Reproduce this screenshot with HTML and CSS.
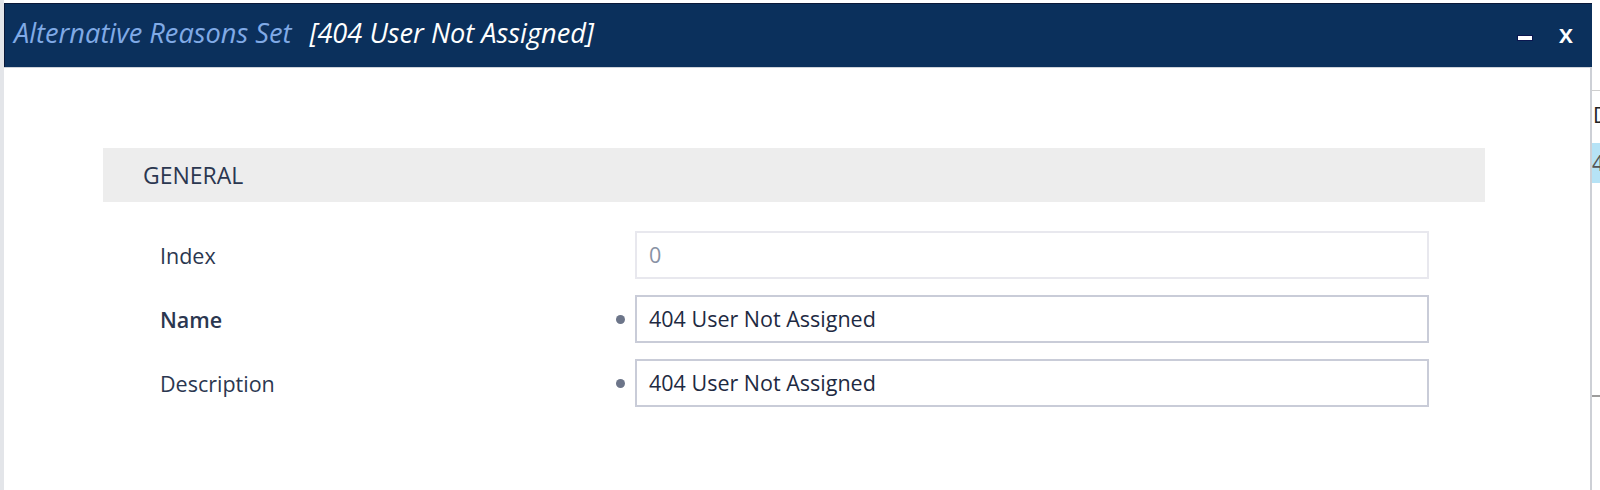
FILE: index.html
```html
<!DOCTYPE html>
<html>

<head>
    <title>Alternative Reasons Set</title>
    <link rel="stylesheet" href="styles.css">
</head>

<body>
    <div class="page-edge"></div>

    <div class="dialog">
        <div class="dialog-header">
            <div class="dialog-title"><span class="title-type">Alternative Reasons Set</span><span class="title-name">[404 User Not Assigned]</span></div>
            <div class="dialog-controls">
                <span class="minimize-btn"></span>
                <span class="close-btn">x</span>
            </div>
        </div>

        <div class="dialog-body">
            <div class="section-title">GENERAL</div>

            <div class="form-rows">
                <div class="form-row">
                    <div class="field-label">Index</div>
                    <div class="field-mark"></div>
                    <div class="field-input disabled">0</div>
                </div>
                <div class="form-row">
                    <div class="field-label required">Name</div>
                    <div class="field-mark"><span class="dot"></span></div>
                    <div class="field-input">404 User Not Assigned</div>
                </div>
                <div class="form-row">
                    <div class="field-label">Description</div>
                    <div class="field-mark"><span class="dot"></span></div>
                    <div class="field-input">404 User Not Assigned</div>
                </div>
            </div>
        </div>
    </div>

    <!-- table behind the dialog, mostly hidden -->
    <div class="behind">
        <div class="behind-head">D</div>
        <div class="behind-row">4</div>
        <div class="behind-rule"></div>
    </div>
</body>

</html>
```

FILE: styles.css
```css
body {
    margin: 0;
    height: 490px;
    overflow: hidden;
    display: flex;
    font-family: 'Open Sans', 'Noto Sans', sans-serif;
    background: white;
    color: #2b3750;
}

.page-edge {
    width: 4px;
    background: #e3e5e9;
}

.dialog {
    width: 1588px;
    margin-top: 3px;
    display: flex;
    flex-direction: column;
}

.dialog-header {
    height: 63px;
    background: #0b305c;
    border-top: 1px solid #0a1838;
    border-left: 1px solid #0a1838;
    display: flex;
    align-items: center;
    justify-content: space-between;
    padding: 0 0 0 9px;
}

.dialog-title {
    font-style: italic;
    font-size: 27.2px;
    white-space: nowrap;
    margin-top: -6px;
}

.title-type {
    color: #80aae6;
}

.title-name {
    color: white;
    margin-left: 18px;
}

.dialog-controls {
    display: flex;
    align-items: center;
    gap: 26px;
    margin-right: 19px;
}

.minimize-btn {
    width: 14px;
    height: 4px;
    background: white;
    border: 1px solid #0a1650;
    margin-top: 4px;
}

.close-btn {
    color: white;
    font-weight: 600;
    font-size: 26px;
    margin-top: -6px;
}

.dialog-body {
    flex: 1;
    border-top: 1px solid #cfd3da;
    border-right: 2px solid #cdd0d6;
    padding: 80px 105px 0 99px;
}

.section-title {
    background: #ededed;
    height: 54px;
    line-height: 54px;
    padding-left: 40px;
    font-size: 23px;
    color: #2b3750;
}

.form-rows {
    display: flex;
    flex-direction: column;
    gap: 16px;
    margin-top: 29px;
    padding-left: 57px;
}

.form-row {
    display: grid;
    grid-template-columns: 452px 23px 794px;
    align-items: center;
}

.field-label {
    font-size: 21.5px;
    color: #2b3750;
}

.field-label.required {
    font-weight: 600;
}

.field-mark {
    display: flex;
    align-items: center;
}

.dot {
    width: 9px;
    height: 9px;
    border-radius: 50%;
    background: #6c7589;
    margin-left: 4px;
}

.field-input {
    height: 44px;
    line-height: 44px;
    border: 2px solid #c9ccd8;
    padding-left: 12px;
    font-size: 21.5px;
    color: #1e2a42;
}

.field-input.disabled {
    border-color: #e8e8ee;
    color: #8892a4;
}

.behind {
    flex: 1;
    position: relative;
    overflow: hidden;
    padding-top: 90px;
    font-size: 21px;
    color: #333;
}

.behind-head {
    border-top: 1px solid #cfcfcf;
    height: 52px;
    line-height: 48px;
    padding-left: 1px;
    color: #222;
}

.behind-row {
    height: 40px;
    line-height: 40px;
    background: #b6e3f6;
    padding-left: 0;
    color: #555;
}

.behind-rule {
    margin-top: 212px;
    height: 2px;
    background: #9c9c9c;
}
```
